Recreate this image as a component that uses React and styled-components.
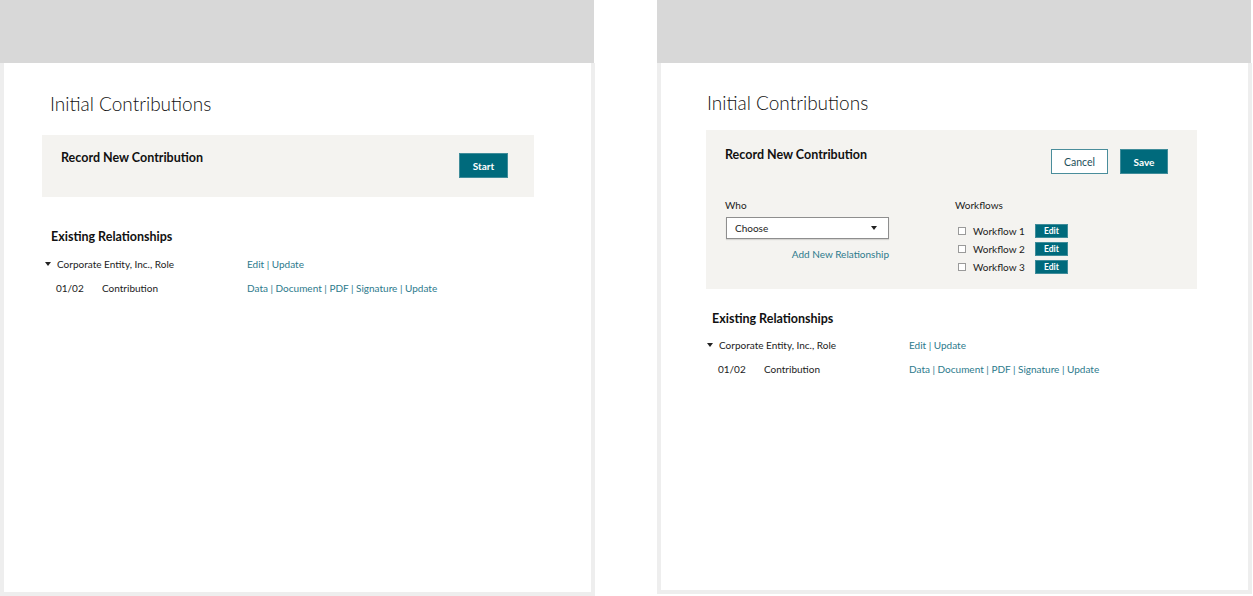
import styled, { createGlobalStyle } from "styled-components";

const GlobalStyle = createGlobalStyle`
  html, body {
    margin: 0;
    padding: 0;
    background: #ffffff;
  }
  body {
    font-family: "Lato", "Noto Sans", sans-serif;
    color: #1b1b1b;
  }
`;

const TEAL = "#006a7c";
const LINK = "#2c7a8c";

const Page = styled.div`
  display: flex;
  gap: 62px;
  width: 1253px;
  height: 596px;
  overflow: hidden;
`;

const Frame = styled.div`
  display: flex;
  flex-direction: column;
  width: 595px;
  height: ${(p) => p.$height}px;
`;

const TopBar = styled.div`
  height: 63px;
  width: 594px;
  background: #d8d8d8;
  flex: none;
`;

const Panel = styled.div`
  flex: 1;
  border: 4px solid #eeeeee;
  border-top: none;
  padding: ${(p) => p.$top}px 0 0 ${(p) => p.$left}px;
  background: #ffffff;
`;

const Title = styled.h1`
  margin: 0 0 ${(p) => p.$gap}px ${(p) => p.$inset}px;
  font-size: 19px;
  line-height: 24px;
  font-weight: 300;
  color: #111;
`;

const Card = styled.div`
  width: ${(p) => p.$width}px;
  background: #f4f3f0;
  padding: ${(p) => p.$pad};
  box-sizing: border-box;
`;

const CardHead = styled.div`
  display: flex;
  justify-content: space-between;
  align-items: flex-start;
`;

const CardTitle = styled.h2`
  margin: 0;
  font-size: 12.5px;
  line-height: 18px;
  font-weight: 700;
  color: #111;
`;

const Buttons = styled.div`
  display: flex;
  gap: 12px;
  margin-top: ${(p) => p.$top}px;
`;

const Button = styled.button`
  height: 25px;
  width: ${(p) => p.$w}px;
  padding: 0;
  font-family: inherit;
  font-size: ${(p) => (p.$ghost ? "10.5px" : "10px")};
  font-weight: ${(p) => (p.$ghost ? 400 : 700)};
  color: ${(p) => (p.$ghost ? "#1d4f5a" : "#ffffff")};
  background: ${(p) => (p.$ghost ? "#ffffff" : TEAL)};
  border: 1px solid ${(p) => (p.$ghost ? "#4a8d9b" : "#3f8c9a")};
  cursor: pointer;
`;

const FormGrid = styled.div`
  display: grid;
  grid-template-columns: 230px 1fr;
  margin-top: 24px;
`;

const Field = styled.div`
  display: flex;
  flex-direction: column;
`;

const Label = styled.div`
  font-size: 10px;
  line-height: 14px;
  color: #1b1b1b;
  margin-bottom: ${(p) => p.$gap}px;
`;

const Select = styled.div`
  display: flex;
  align-items: center;
  justify-content: space-between;
  width: 163px;
  height: 22px;
  box-sizing: border-box;
  margin-left: 1px;
  padding: 0 11px 0 8px;
  background: #ffffff;
  border: 1px solid #8e8e8e;
  box-shadow: 0 1px 1px rgba(0, 0, 0, 0.12);
  font-size: 10px;
  color: #1b1b1b;
`;

const Caret = styled.span`
  width: 0;
  height: 0;
  border-left: 3.5px solid transparent;
  border-right: 3.5px solid transparent;
  border-top: 4px solid #222;
`;

const AddLink = styled.a`
  width: 164px;
  text-align: right;
  margin-top: 8px;
  font-size: 10px;
  line-height: 14px;
  color: ${LINK};
  text-decoration: none;
`;

const WorkflowList = styled.div`
  display: flex;
  flex-direction: column;
  gap: 4px;
  padding-left: 3px;
`;

const WorkflowRow = styled.div`
  display: flex;
  align-items: center;
  height: 14px;
  font-size: 10px;
  color: #1b1b1b;
`;

const Check = styled.span`
  width: 8px;
  height: 8px;
  box-sizing: border-box;
  border: 1px solid #9a9a9a;
  background: #fff;
  margin-right: 7px;
`;

const WorkflowName = styled.span`
  width: 62px;
`;

const SmallButton = styled.button`
  width: 33px;
  height: 14px;
  padding: 0;
  font-family: inherit;
  font-size: 8.5px;
  font-weight: 700;
  color: #fff;
  background: ${TEAL};
  border: 1px solid #3f8c9a;
`;

const Section = styled.div`
  margin-top: ${(p) => p.$top}px;
`;

const SectionTitle = styled.h3`
  margin: 0 0 ${(p) => p.$gap}px ${(p) => p.$inset}px;
  font-size: 12.5px;
  line-height: 18px;
  font-weight: 700;
  color: #111;
`;

const Row = styled.div`
  display: grid;
  grid-template-columns: 202px 1fr;
  height: 24px;
  align-items: start;
  padding-left: ${(p) => p.$inset}px;
  font-size: 10px;
  line-height: 16px;
  color: #1b1b1b;
`;

const Name = styled.div`
  display: flex;
  align-items: center;
  padding-left: ${(p) => p.$pad || 0}px;
`;

const Toggle = styled.span`
  width: 0;
  height: 0;
  border-left: 3px solid transparent;
  border-right: 3px solid transparent;
  border-top: 4px solid #222;
  margin-right: 6px;
`;

const Date = styled.span`
  width: 46px;
`;

const Links = styled.div`
  color: ${LINK};
  a {
    color: ${LINK};
    text-decoration: none;
  }
`;

const LinkList = ({ items }) => (
  <Links>
    {items.map((t, i) => (
      <span key={t}>
        {i > 0 && " | "}
        <a href="#">{t}</a>
      </span>
    ))}
  </Links>
);

const Relationships = ({ top, gap, headInset, rowInset }) => (
  <Section $top={top}>
    <SectionTitle $gap={gap} $inset={headInset}>
      Existing Relationships
    </SectionTitle>
    <Row $inset={rowInset}>
      <Name>
        <Toggle />
        Corporate Entity, Inc., Role
      </Name>
      <LinkList items={["Edit", "Update"]} />
    </Row>
    <Row $inset={rowInset}>
      <Name $pad={11}>
        <Date>01/02</Date>
        Contribution
      </Name>
      <LinkList items={["Data", "Document", "PDF", "Signature", "Update"]} />
    </Row>
  </Section>
);

export default function App() {
  return (
    <>
      <GlobalStyle />
      <Page>
        <Frame $height={596}>
          <TopBar />
          <Panel $top={29} $left={38}>
            <Title $gap={19} $inset={8}>
              Initial Contributions
            </Title>
            <Card $width={492} $pad="14px 26px 19px 19px">
              <CardHead>
                <CardTitle>Record New Contribution</CardTitle>
                <Buttons $top={4}>
                  <Button $w={49}>Start</Button>
                </Buttons>
              </CardHead>
            </Card>
            <Relationships top={31} gap={10} headInset={9} rowInset={3} />
          </Panel>
        </Frame>
        <Frame $height={594}>
          <TopBar />
          <Panel $top={28} $left={45}>
            <Title $gap={15} $inset={1}>
              Initial Contributions
            </Title>
            <Card $width={491} $pad="16px 29px 15px 19px">
              <CardHead>
                <CardTitle>Record New Contribution</CardTitle>
                <Buttons $top={3}>
                  <Button $ghost $w={57}>
                    Cancel
                  </Button>
                  <Button $w={48}>Save</Button>
                </Buttons>
              </CardHead>
              <FormGrid>
                <Field>
                  <Label $gap={5}>Who</Label>
                  <Select>
                    Choose
                    <Caret />
                  </Select>
                  <AddLink href="#">Add New Relationship</AddLink>
                </Field>
                <Field>
                  <Label $gap={12}>Workflows</Label>
                  <WorkflowList>
                    {[1, 2, 3].map((n) => (
                      <WorkflowRow key={n}>
                        <Check />
                        <WorkflowName>Workflow {n}</WorkflowName>
                        <SmallButton>Edit</SmallButton>
                      </WorkflowRow>
                    ))}
                  </WorkflowList>
                </Field>
              </FormGrid>
            </Card>
            <Relationships top={21} gap={9} headInset={6} rowInset={1} />
          </Panel>
        </Frame>
      </Page>
    </>
  );
}
